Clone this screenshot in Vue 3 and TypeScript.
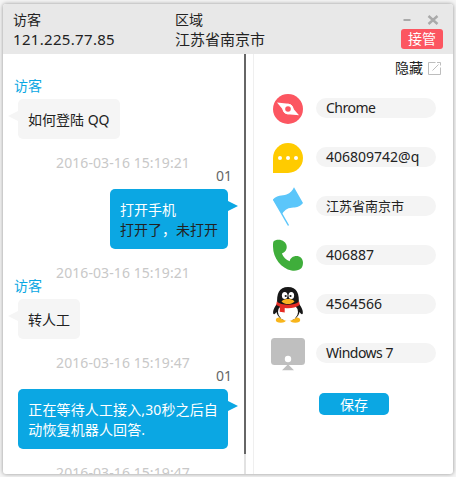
<script setup lang="ts">
interface Message {
  id: number
  from: 'visitor' | 'agent'
  name: string
  lines: { text: string; dark?: boolean }[]
  time: string
}

interface Field {
  icon: 'browser' | 'chat' | 'flag' | 'phone' | 'qq' | 'system'
  value: string
  style?: 'small' | 'tight'
}

const messages: Message[] = [
  { id: 1, from: 'visitor', name: '访客', lines: [{ text: '如何登陆 QQ' }], time: '2016-03-16 15:19:21' },
  {
    id: 2,
    from: 'agent',
    name: '01',
    lines: [{ text: '打开手机' }, { text: '打开了，未打开', dark: true }],
    time: '2016-03-16 15:19:21',
  },
  { id: 3, from: 'visitor', name: '访客', lines: [{ text: '转人工' }], time: '2016-03-16 15:19:47' },
  {
    id: 4,
    from: 'agent',
    name: '01',
    lines: [{ text: '正在等待人工接入,30秒之后自' }, { text: '动恢复机器人回答.' }],
    time: '2016-03-16 15:19:47',
  },
]

const fields: Field[] = [
  { icon: 'browser', value: 'Chrome', style: 'tight' },
  { icon: 'chat', value: '406809742@q' },
  { icon: 'flag', value: '江苏省南京市', style: 'small' },
  { icon: 'phone', value: '406887' },
  { icon: 'qq', value: '4564566' },
  { icon: 'system', value: 'Windows 7', style: 'tight' },
]

// Full-width commas keep the bubble's own colour inside dark lines.
const pieces = (text: string): string[] => text.split(/(，)/)
</script>

<template>
  <div class="page">
    <section class="window">
      <header class="header">
        <div class="info visitor-info">
          <span class="label">访客</span>
          <span class="value ip">121.225.77.85</span>
        </div>
        <div class="info">
          <span class="label">区域</span>
          <span class="value">江苏省南京市</span>
        </div>
        <div class="controls">
          <div class="window-buttons">
            <svg width="8" height="12" viewBox="0 0 8 12"><path d="M0.5 6h7" stroke="#aaa" stroke-width="2" /></svg>
            <svg width="12" height="12" viewBox="0 0 12 12">
              <path d="M1.5 2l9 8M10.5 2l-9 8" stroke="#aaa" stroke-width="2.4" />
            </svg>
          </div>
          <button class="takeover">接管</button>
        </div>
      </header>

      <div class="body">
        <div class="chat">
          <div v-for="m in messages" :key="m.id" class="message" :class="m.from">
            <span class="name">{{ m.name }}</span>
            <div class="bubble">
              <p v-for="line in m.lines" :key="line.text" :class="{ dark: line.dark }">
                <span v-for="(part, i) in pieces(line.text)" :key="i" :class="{ comma: part === '，' }">{{ part }}</span>
              </p>
            </div>
            <time class="time">{{ m.time }}</time>
          </div>
        </div>
        <div class="scrollbar"><div class="thumb"></div></div>

        <aside class="side">
          <div class="toolbar">
            <span>隐藏</span>
            <svg width="13" height="13" viewBox="0 0 13 13" fill="none" stroke="#bdbdbd">
              <path d="M7.500 0.500h-7v12h12v-7M4.500 8.500l6-6M9 0.500h3.500v3" />
            </svg>
          </div>

          <div v-for="f in fields" :key="f.icon" class="field">
            <svg class="icon" width="36" height="49" viewBox="0 0 36 49">
              <g v-if="f.icon === 'browser'">
                <circle cx="18" cy="25" r="15" fill="#fc5661" />
                <path d="M7 18.500L18.500 19.800Q22.500 20.500 24 25.500L29 31.300 17.500 30.200Q13.500 29.500 12 24.500z" fill="#fff" />
                <circle cx="18" cy="25" r="5.200" fill="#fff" />
                <circle cx="18" cy="25" r="2.800" fill="#fc5661" />
              </g>
              <g v-else-if="f.icon === 'chat'">
                <path d="M3 40V25a15 15 0 1 1 15 15z" fill="#ffcb00" />
                <circle cx="10" cy="25" r="2" fill="#fff" />
                <circle cx="18" cy="25" r="2" fill="#fff" />
                <circle cx="26" cy="25" r="2" fill="#fff" />
              </g>
              <g v-else-if="f.icon === 'flag'" fill="#5bc6fa">
                <path d="M3 17.600c4-5 9-3.300 13.500-5.100 4-1.500 6-4 7.500-7.200L33 21c-3 3.800-6 4.300-9.500 4.500-5 .3-8 1.500-11.500 6.500z" />
                <path d="M3.500 17.300L18.500 43.500" fill="none" stroke="#5bc6fa" stroke-width="1.500" />
              </g>
              <path
                v-else-if="f.icon === 'phone'"
                d="M3.500 10.500C5 9 8.500 8.300 11.500 9.300c4 1.300 6 5 5 8.500-.7 2.500-2.600 3.900-4.600 4.700 1.300 3.600 4.200 6.500 7.800 7.800.6-3 3.200-5.200 6.800-5.200 3.500 0 6.500 2.700 6.500 6.500 0 2.200-.4 4.200-1.500 5.400-2.500 2.300-6 3.200-10 2.500C11.500 37.500 3 27.500 3 15.500c0-2 0-3.700.5-5z"
                fill="#3fae3b"
              />
              <g v-else-if="f.icon === 'qq'">
                <ellipse cx="10.800" cy="40" rx="5" ry="2.800" fill="#f8b51b" />
                <ellipse cx="25.200" cy="40" rx="5" ry="2.800" fill="#f8b51b" />
                <path d="M8.500 22C5 26 2.700 30 3.200 33.500c.7 1.600 2.200.2 3.300-1.500.9 4.500 4.500 8.300 11.500 8.300S28.600 36.500 29.500 32c1.100 1.700 2.600 3.100 3.300 1.500C33.300 30 31 26 27.500 22z" fill="#171717" />
                <ellipse cx="18" cy="32" rx="10" ry="9" fill="#fff" />
                <path d="M7.300 24C6.300 14 9 7 18 7s11.700 7 10.700 17c-4 3-17.400 3-21.400 0z" fill="#171717" />
                <ellipse cx="14.700" cy="15.500" rx="2.800" ry="3.600" fill="#fff" />
                <ellipse cx="21.300" cy="15.500" rx="2.800" ry="3.600" fill="#fff" />
                <circle cx="15.700" cy="16" r="1.100" fill="#171717" />
                <circle cx="20.500" cy="16" r="1.100" fill="#171717" />
                <path d="M11.500 21.500c1.500-2 4-2.500 6.500-2.500s5 .5 6.500 2.500c-2 1.800-4 2.600-6.500 2.600s-4.500-.8-6.500-2.600z" fill="#f9b021" />
                <path d="M6.800 21.500c5 4.400 17.400 4.400 22.400 0l.5 3.600c-4.500 3-9.500 3.500-15 3v4.500l-5-.8.300-5-3.800-1.800z" fill="#e52b24" />
              </g>
              <g v-else>
                <rect x="1" y="9" width="34" height="27" rx="3.500" fill="#bfbfbf" />
                <circle cx="18" cy="30" r="3.200" fill="#fff" />
                <path d="M18 35.200l6 6H12z" fill="#bfbfbf" />
              </g>
            </svg>
            <span class="pill" :class="f.style">{{ f.value }}</span>
          </div>

          <button class="save">保存</button>
        </aside>
      </div>
    </section>
  </div>
</template>

<style>
body {
  margin: 0;
  background: #f5f5f5;
}
</style>

<style scoped>
.page {
  box-sizing: border-box;
  width: 456px;
  height: 477px;
  padding: 4px 3px 3px;
  overflow: hidden;
  font: 14px/20px 'Noto Sans', 'Noto Sans CJK SC', sans-serif;
  color: #222;
}

.window {
  display: flex;
  flex-direction: column;
  width: 450px;
  height: 470px;
  border-radius: 3px;
  background: #fff;
  box-shadow: 0 0 4px rgba(0, 0, 0, 0.4);
  overflow: hidden;
}

.header {
  display: flex;
  height: 50px;
  padding: 0 10px;
  box-sizing: border-box;
  background: #e8e8e8;
}

.info {
  display: flex;
  flex-direction: column;
  padding-top: 6px;
}

.visitor-info {
  width: 162px;
}

.value {
  margin-top: -1px;
  font-size: 15px;
}

.ip {
  letter-spacing: 0.32px;
}

.controls {
  display: flex;
  flex-direction: column;
  align-items: flex-end;
  margin-left: auto;
}

.window-buttons {
  display: flex;
  gap: 16px;
  padding: 10px 4px 3px 0;
}

button {
  border: 0;
  padding: 0;
  color: #fff;
  font: inherit;
  text-align: center;
}

.takeover {
  width: 42px;
  height: 20px;
  border-radius: 3px;
  background: #fc5661;
}

.body {
  display: flex;
  flex: 1;
  min-height: 0;
}

.chat {
  width: 241px;
  padding-top: 22px;
  box-sizing: border-box;
  overflow: hidden;
}

.message {
  display: flex;
  flex-direction: column;
  align-items: flex-start;
  padding: 0 16px 0 15px;
}

.message + .message {
  margin-top: -7px;
}

.name {
  margin-left: -4px;
  color: #0ba7e3;
}

.bubble {
  position: relative;
  margin-top: 3px;
  padding: 11px 10px 9px;
  border-radius: 5px;
  background: #f5f5f5;
}

.bubble p {
  margin: 0;
  white-space: nowrap;
}

.bubble::before {
  content: '';
  position: absolute;
  top: 12px;
  left: -10px;
  border: 5px solid transparent;
  border-left-width: 0;
  border-right: 10px solid #f5f5f5;
}

.agent {
  align-items: flex-end;
}

.agent .name {
  margin: 0 -4px 0 0;
  color: #666;
}

.agent .bubble {
  background: #0ba7e3;
  color: #fff;
}

.agent:last-child .bubble {
  letter-spacing: 0.13px;
}

.agent .bubble::before {
  left: auto;
  right: -10px;
  border-right-width: 0;
  border-left: 10px solid #0ba7e3;
  border-right-color: transparent;
}

.bubble .dark {
  color: #222;
}

.dark .comma {
  color: #fff;
}

.time {
  align-self: center;
  margin-top: 14px;
  color: #c8c8c8;
  letter-spacing: 0.08px;
}

.scrollbar {
  width: 2px;
  background: #e2e2e2;
}

.thumb {
  height: 400px;
  background: #666;
}

.side {
  display: flex;
  flex: 1;
  flex-direction: column;
  margin-left: 7px;
  border-left: 1px solid #efefef;
}

.toolbar {
  display: flex;
  justify-content: flex-end;
  gap: 5px;
  height: 26px;
  padding: 4px 12px 0 0;
}

.toolbar svg {
  margin-top: 4px;
}

.field {
  display: flex;
  align-items: center;
  gap: 10px;
  height: 49px;
  padding-left: 16px;
}

.pill {
  width: 110px;
  height: 20px;
  margin-bottom: 1px;
  padding-left: 10px;
  border-radius: 10px;
  background: #f4f4f4;
}

.small {
  font-size: 13px;
}

.tight {
  letter-spacing: -0.5px;
}

.save {
  align-self: flex-start;
  width: 70px;
  height: 22px;
  margin: 15px 0 0 65px;
  padding-top: 1px;
  border-radius: 5px;
  background: #0ba7e3;
}
</style>
